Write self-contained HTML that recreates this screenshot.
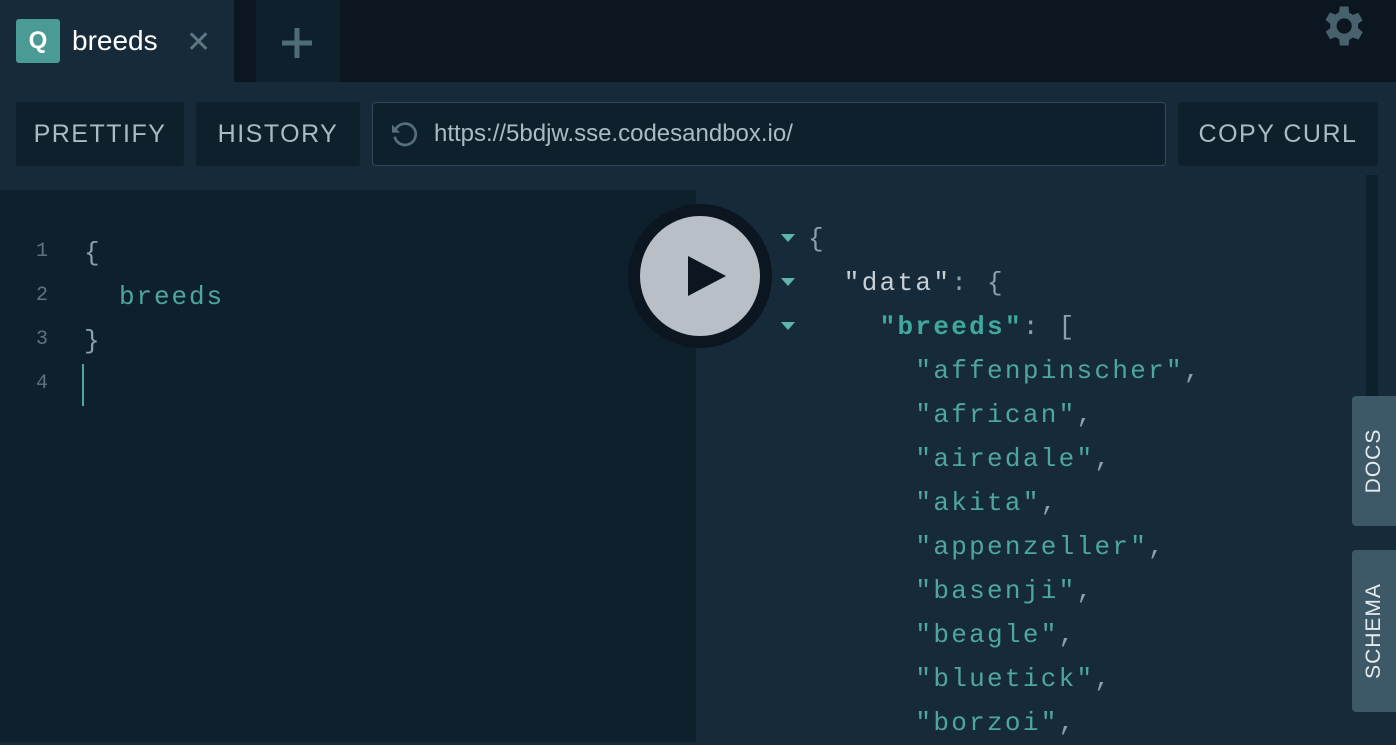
<html><head><style>
body{margin:0;width:1396px;height:742px;overflow:hidden;background:#172a3a;font-family:"Liberation Sans",sans-serif;position:relative}
div{position:absolute;box-sizing:border-box}
.btn{background:#0f202d;border-radius:3px;color:#a9bcc4;font-size:25px;letter-spacing:1.5px;display:flex;align-items:center;justify-content:center;top:102px;height:64px}
.code{font-family:"Liberation Mono",monospace;font-size:26px;letter-spacing:1.9px;line-height:44px;white-space:pre}
.ln{color:#5f7280;font-family:"Liberation Mono",monospace;font-size:20px;line-height:44px;width:40px;text-align:right;left:8px}
.t{color:#4ea79f}.g{color:#8aa0ab}.k{color:#c6cfd5}.b{color:#3fa9a0;font-weight:bold}
.tri{width:0;height:0;border-left:7px solid transparent;border-right:7px solid transparent;border-top:8px solid #5fb5ad;left:781px}
.side{background:#3d5866;border-radius:4px 0 0 4px;left:1352px;width:44px;color:#e4ecef;font-size:21px;letter-spacing:1px}
.side span{position:absolute;left:50%;top:50%;transform:translate(-50%,-50%) rotate(-90deg);white-space:nowrap}
</style></head><body>
<div style="left:0;top:0;width:1396px;height:82px;background:#0b1621"></div>
<div style="left:0;top:0;width:234px;height:82px;background:#172a3a"></div>
<div style="left:16px;top:19px;width:44px;height:44px;background:#4a9a95;border-radius:3px;color:#fff;font-weight:bold;font-size:24px;text-align:center;line-height:44px">Q</div>
<div style="left:72px;top:25px;color:#fff;font-size:28px">breeds</div>
<div style="left:186px;top:25px;color:#5f7983;font-size:30px">✕</div>
<div style="left:256px;top:0;width:84px;height:82px;background:#0f202d"></div>
<svg style="position:absolute;left:280px;top:26px" width="34" height="34"><path d="M17 2V32M2 17H32" stroke="#4f6d77" stroke-width="5"/></svg>
<svg style="position:absolute;left:1316px;top:0px" width="52" height="52" viewBox="0 0 24 24"><path fill="#47626d" d="M19.4 13a7.5 7.5 0 0 0 0-2l2.1-1.6-2-3.5-2.5 1a7 7 0 0 0-1.7-1L15 3h-4l-.4 2.7a7 7 0 0 0-1.7 1l-2.5-1-2 3.5L6.6 11a7.5 7.5 0 0 0 0 2l-2.1 1.6 2 3.5 2.5-1a7 7 0 0 0 1.7 1L11 21h4l.4-2.7a7 7 0 0 0 1.7-1l2.5 1 2-3.5zM13 15.5a3.5 3.5 0 1 1 0-7 3.5 3.5 0 0 1 0 7z"/></svg>
<div class="btn" style="left:16px;width:168px">PRETTIFY</div>
<div class="btn" style="left:196px;width:164px">HISTORY</div>
<div style="left:372px;top:102px;width:794px;height:64px;background:#0f202d;border:1px solid #34495a;border-radius:4px"></div>
<svg style="position:absolute;left:388px;top:118px" width="32" height="32" viewBox="0 0 24 24"><path d="M6 8a8 8 0 1 1-1 6" fill="none" stroke="#56707a" stroke-width="2"/><path d="M3 5v6h6z" fill="#56707a"/></svg>
<div style="left:434px;top:120px;color:#a9bcc4;font-size:24px">https://5bdjw.sse.codesandbox.io/</div>
<div class="btn" style="left:1178px;width:200px">COPY CURL</div>
<div style="left:0;top:190px;width:696px;height:552px;background:#0f202d"></div>
<div style="left:1366px;top:175px;width:12px;height:290px;background:#0f202d"></div>
<div class="ln" style="top:230px">1</div><div class="ln" style="top:274px">2</div><div class="ln" style="top:318px">3</div><div class="ln" style="top:362px">4</div>
<div class="code g" style="left:84px;top:231px">{</div>
<div class="code t" style="left:84px;top:275px">  breeds</div>
<div class="code g" style="left:84px;top:319px">}</div>
<div style="left:82px;top:364px;width:2px;height:42px;background:#4ea79f"></div>
<div style="left:628px;top:204px;width:144px;height:144px;border-radius:50%;background:#0b1621"></div>
<div style="left:640px;top:216px;width:120px;height:120px;border-radius:50%;background:#b9bfc7"></div>
<svg style="position:absolute;left:686px;top:254px" width="42" height="44"><path d="M2 2L40 22L2 42z" fill="#0b1621"/></svg>
<div class="tri" style="top:234px"></div><div class="tri" style="top:278px"></div><div class="tri" style="top:322px"></div>
<div class="code" style="left:808px;top:217px;letter-spacing:2.3px"><span class="g">{</span>
<span class="k">  "data"</span><span class="g">: {</span>
    <span class="b">"breeds"</span><span class="g">: [</span>
<span class="t">      "affenpinscher"</span><span class="g">,</span>
<span class="t">      "african"</span><span class="g">,</span>
<span class="t">      "airedale"</span><span class="g">,</span>
<span class="t">      "akita"</span><span class="g">,</span>
<span class="t">      "appenzeller"</span><span class="g">,</span>
<span class="t">      "basenji"</span><span class="g">,</span>
<span class="t">      "beagle"</span><span class="g">,</span>
<span class="t">      "bluetick"</span><span class="g">,</span>
<span class="t">      "borzoi"</span><span class="g">,</span></div>
<div class="side" style="top:396px;height:130px"><span>DOCS</span></div>
<div class="side" style="top:550px;height:162px"><span>SCHEMA</span></div>
</body></html>
